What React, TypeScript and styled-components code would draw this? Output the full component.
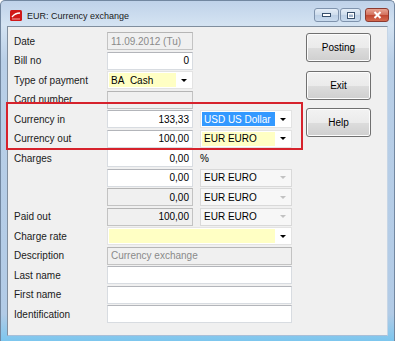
import React from "react";
import styled, { createGlobalStyle, css } from "styled-components";

const Global = createGlobalStyle`
  html, body { margin: 0; padding: 0; background: #ffffff; }
  body { font-family: "Liberation Sans", Arial, sans-serif; }
`;

const Window = styled.div`
  width: 395px;
  height: 341px;
  box-sizing: border-box;
  display: flex;
  flex-direction: column;
  background: linear-gradient(to bottom, #bfd2e9 0px, #d4e3f2 24px, #b9cfe7 60px, #b2cbe6 92%, #7cc6ee 100%);
  border: 1px solid #7287a0;
  border-bottom: none;
  border-radius: 5px 5px 0 0;
  padding: 0 6px 5px 6px;
  overflow: hidden;
`;

const TitleBar = styled.div`
  height: 25px;
  flex: none;
  display: flex;
  align-items: center;
  padding-left: 3px;
`;

const AppIcon = styled.svg`
  width: 12px;
  height: 11px;
  margin-right: 5px;
  margin-top: 3px;
`;

const Title = styled.div`
  font-family: "Liberation Sans", Arial, sans-serif;
  font-size: 9px;
  color: #1a1a1a;
  margin-top: 4px;
  flex: 1;
`;

const CaptionButtons = styled.div`
  display: flex;
  gap: 1px;
  align-self: flex-start;
  margin-top: 7px;
  margin-right: -1px;
`;

const CapBtn = styled.div<{ $w: number; $close?: boolean }>`
  width: ${(p) => p.$w}px;
  height: 14px;
  box-sizing: border-box;
  border: 1px solid #7f93ad;
  border-radius: 3px;
  display: flex;
  align-items: center;
  justify-content: center;
  background: linear-gradient(to bottom, #e4edf7 0%, #cddcec 50%, #bccfe5 51%, #c9dbee 100%);
  ${(p) =>
    p.$close &&
    css`
      border-color: #8c3a30;
      background: linear-gradient(to bottom, #e8a493 0%, #d2705c 50%, #c04631 51%, #d56a4f 100%);
      margin-left: 3px;
    `}
`;

const Client = styled.div`
  flex: 1;
  position: relative;
  background: #f0f0f0;
  border: 1px solid #808e9e;
  border-bottom-color: #a8bfd8;
  border-right-color: #c5d5e6;
  display: flex;
  align-items: flex-start;
  padding: 5px 0 0 5px;
`;

const Form = styled.div`
  display: grid;
  grid-template-columns: 87px 86px 92px;
  grid-auto-rows: 18px;
  row-gap: 1.5px;
  column-gap: 7px;
  font-size: 10px;
  color: #000;
`;

const Label = styled.div`
  grid-column: 1;
  display: flex;
  align-items: center;
  padding-left: 1px;
  color: #1a1a1a;
`;

const Field = styled.div<{ $bg?: "white" | "gray" | "yellow"; $wide?: boolean; $align?: "left" | "right"; $muted?: boolean }>`
  grid-column: ${(p) => (p.$wide ? "2 / 4" : "2")};
  box-sizing: border-box;
  border: 1px solid ${(p) => (p.$bg === "gray" ? "#c3c3c3" : "#d8dce1")};
  border-top-color: ${(p) => (p.$bg === "gray" ? "#b5b5b5" : "#b3b5ba")};
  background: ${(p) => (p.$bg === "gray" ? "#f0f0f0" : p.$bg === "yellow" ? "#ffffc4" : "#ffffff")};
  color: ${(p) => (p.$muted ? "#8a8a8a" : "#000")};
  display: flex;
  align-items: center;
  justify-content: ${(p) => (p.$align === "right" ? "flex-end" : "flex-start")};
  padding: 0 3px;
  white-space: nowrap;
`;

const Combo = styled.div<{ $wide?: boolean; $disabled?: boolean; $col?: number }>`
  grid-column: ${(p) => (p.$wide ? "2 / 4" : String(p.$col ?? 3))};
  box-sizing: border-box;
  border: 1px solid ${(p) => (p.$disabled ? "#d9d9d9" : "#e3e3e3")};
  background: ${(p) => (p.$disabled ? "#f7f7f7" : "#ffffff")};
  display: flex;
  align-items: stretch;
  padding: 1px;
`;

const ComboText = styled.div<{ $bg?: "yellow" | "selected" | "none" }>`
  flex: 1;
  display: flex;
  align-items: center;
  padding-left: 2px;
  white-space: nowrap;
  background: ${(p) => (p.$bg === "yellow" ? "#ffffc4" : p.$bg === "selected" ? "#3399ff" : "transparent")};
  color: ${(p) => (p.$bg === "selected" ? "#ffffff" : "#000")};
`;

const ComboArrow = styled.div<{ $disabled?: boolean }>`
  width: 15px;
  flex: none;
  display: flex;
  align-items: center;
  justify-content: center;
  &::after {
    content: "";
    border-left: 3px solid transparent;
    border-right: 3px solid transparent;
    border-top: 3px solid ${(p) => (p.$disabled ? "#c2c2c2" : "#000")};
  }
`;

const Unit = styled.div`
  grid-column: 3;
  display: flex;
  align-items: center;
`;

const Buttons = styled.div`
  display: flex;
  flex-direction: column;
  gap: 8.5px;
  margin-left: 14px;
  margin-top: 1px;
`;

const Button = styled.button`
  width: 65px;
  height: 29px;
  box-sizing: border-box;
  border: 1px solid #707070;
  border-radius: 3px;
  background: linear-gradient(to bottom, #f2f2f2 0%, #ebebeb 50%, #dddddd 51%, #cfcfcf 100%);
  box-shadow: inset 0 0 0 1px #fcfcfc;
  font-family: "Liberation Sans", Arial, sans-serif;
  font-size: 10px;
  color: #000;
  padding: 0;
`;

const Highlight = styled.div`
  position: absolute;
  left: -2px;
  top: 75px;
  width: 297px;
  height: 48px;
  box-sizing: border-box;
  border: 2px solid #d6222c;
  pointer-events: none;
`;

type FieldBg = "white" | "gray" | "yellow";

const Row: React.FC<{ label?: string; children: React.ReactNode }> = ({ label, children }) => (
  <>
    <Label>{label ?? ""}</Label>
    {children}
  </>
);

const NumField: React.FC<{ value: string; bg?: FieldBg }> = ({ value, bg = "white" }) => (
  <Field $bg={bg} $align="right">
    {value}
  </Field>
);

export default function App() {
  return (
    <>
      <Global />
      <Window>
        <TitleBar>
          <AppIcon viewBox="0 0 12 11">
            <rect x="0" y="0" width="12" height="11" rx="1.5" fill="#d01818" />
            <path d="M2 7 Q5 3 10 3" stroke="#ffffff" strokeWidth="1.3" fill="none" />
            <path d="M2 9 L10 9" stroke="#f7a0a0" strokeWidth="1" />
          </AppIcon>
          <Title>EUR: Currency exchange</Title>
          <CaptionButtons>
            <CapBtn $w={25}>
              <svg width="9" height="4" viewBox="0 0 9 4">
                <rect x="0.5" y="0.5" width="8" height="3" fill="#ffffff" stroke="#38506d" strokeWidth="1" />
              </svg>
            </CapBtn>
            <CapBtn $w={21}>
              <svg width="8" height="7" viewBox="0 0 8 7">
                <rect x="0.5" y="0.5" width="7" height="6" fill="#ffffff" stroke="#38506d" strokeWidth="1" />
                <rect x="2" y="2.5" width="4" height="2.5" fill="#9fb3cc" />
              </svg>
            </CapBtn>
            <CapBtn $w={24} $close>
              <svg width="9" height="8" viewBox="0 0 9 8">
                <path d="M1.5 1 L7.5 7 M7.5 1 L1.5 7" stroke="#ffffff" strokeWidth="2" />
              </svg>
            </CapBtn>
          </CaptionButtons>
        </TitleBar>
        <Client>
          <Form>
            <Row label="Date">
              <Field $bg="gray" $muted>
                11.09.2012 (Tu)
              </Field>
            </Row>
            <Unit />
            <Row label="Bill no">
              <NumField value="0" />
            </Row>
            <Unit />
            <Row label="Type of payment">
              <Combo $col={2}>
                <ComboText $bg="yellow">BA&nbsp;&nbsp;Cash</ComboText>
                <ComboArrow />
              </Combo>
            </Row>
            <Unit />
            <Row label="Card number">
              <Field $bg="gray" />
            </Row>
            <Unit />
            <Row label="Currency in">
              <NumField value="133,33" />
              <Combo>
                <ComboText $bg="selected">USD US Dollar</ComboText>
                <ComboArrow />
              </Combo>
            </Row>
            <Row label="Currency out">
              <NumField value="100,00" />
              <Combo>
                <ComboText $bg="yellow">EUR EURO</ComboText>
                <ComboArrow />
              </Combo>
            </Row>
            <Row label="Charges">
              <NumField value="0,00" />
              <Unit>%</Unit>
            </Row>
            <Row>
              <NumField value="0,00" />
              <Combo $disabled>
                <ComboText>EUR EURO</ComboText>
                <ComboArrow $disabled />
              </Combo>
            </Row>
            <Row>
              <NumField value="0,00" bg="gray" />
              <Combo $disabled>
                <ComboText>EUR EURO</ComboText>
                <ComboArrow $disabled />
              </Combo>
            </Row>
            <Row label="Paid out">
              <NumField value="100,00" bg="gray" />
              <Combo $disabled>
                <ComboText>EUR EURO</ComboText>
                <ComboArrow $disabled />
              </Combo>
            </Row>
            <Row label="Charge rate">
              <Combo $wide>
                <ComboText $bg="yellow" />
                <ComboArrow />
              </Combo>
            </Row>
            <Row label="Description">
              <Field $bg="gray" $wide $muted>
                Currency exchange
              </Field>
            </Row>
            <Row label="Last name">
              <Field $wide />
            </Row>
            <Row label="First name">
              <Field $wide />
            </Row>
            <Row label="Identification">
              <Field $wide />
            </Row>
          </Form>
          <Buttons>
            <Button>Posting</Button>
            <Button>Exit</Button>
            <Button>Help</Button>
          </Buttons>
          <Highlight />
        </Client>
      </Window>
    </>
  );
}
